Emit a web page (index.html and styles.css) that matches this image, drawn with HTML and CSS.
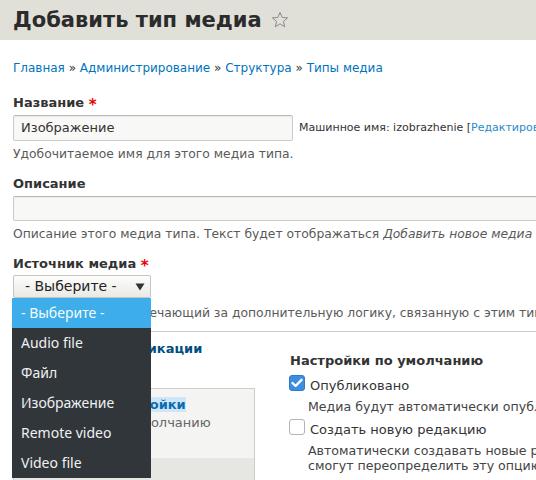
FILE: index.html
```html
<!DOCTYPE html>
<html lang="ru">
<head>
<meta charset="utf-8">
<title>Добавить тип медиа</title>
<link rel="stylesheet" href="styles.css">
</head>
<body>
<header class="page-head">
  <h1 class="page-title">Добавить тип медиа<svg class="star" width="18" height="18" viewBox="0 0 20 20" aria-hidden="true"><polygon points="10,1.5 12.4,7.2 18.5,7.6 13.8,11.6 15.3,17.6 10,14.3 4.7,17.6 6.2,11.6 1.5,7.6 7.6,7.2" fill="none" stroke="#8a8a8a" stroke-width="1.1" stroke-linejoin="round"/></svg></h1>
</header>
<main class="content">
  <nav class="breadcrumb">
    <a href="#">Главная</a> » <a href="#">Администрирование</a> » <a href="#">Структура</a> » <a href="#">Типы медиа</a>
  </nav>

  <div class="field field-first">
    <div class="label">Название <span class="req">*</span></div>
    <div class="input-row">
      <div class="text-input name-input">Изображение</div>
      <span class="machine-name">Машинное имя: izobrazhenie [<a href="#">Редактировать</a>]</span>
    </div>
    <div class="desc">Удобочитаемое имя для этого медиа типа.</div>
  </div>

  <div class="field">
    <div class="label">Описание</div>
    <div class="text-input wide-input"></div>
    <div class="desc">Описание этого медиа типа. Текст будет отображаться <em>Добавить новое медиа</em> на странице.</div>
  </div>

  <div class="field">
    <div class="label label-select">Источник медиа <span class="req">*</span></div>
    <div class="select-wrap">
      <div class="select">- Выберите -<svg class="select-arrow" width="10" height="8" viewBox="0 0 10 8" aria-hidden="true"><polygon points="0.5,0.5 9.5,0.5 5,7.5" fill="#333"/></svg></div>
      <ul class="dropdown">
        <li class="opt opt-active">- Выберите -</li>
        <li class="opt">Audio file</li>
        <li class="opt">Файл</li>
        <li class="opt">Изображение</li>
        <li class="opt">Remote video</li>
        <li class="opt">Video file</li>
      </ul>
    </div>
    <div class="desc desc-select">Источник медиа, отвечающий за дополнительную логику, связанную с этим типом медиа.</div>
  </div>

  <div class="vtabs">
    <ul class="vtabs-menu">
      <li class="vtab vtab-selected">
        <a href="#" class="vtab-title vtab-title-dark">Настройки публикации</a>
        <div class="vtab-summary">Опубликовано</div>
      </li>
      <li class="vtab vtab-other">
        <a href="#" class="vtab-title"><span class="focus">Языковые настройки</span></a>
        <div class="vtab-summary">Язык сайта: по умолчанию</div>
      </li>
    </ul>
    <div class="vtabs-pane">
      <div class="pane-heading">Настройки по умолчанию</div>
      <div class="check-row">
        <span class="checkbox checked"><svg width="12" height="10" viewBox="0 0 12 10" aria-hidden="true"><polyline points="1.5,5 4.6,8 10.5,1.8" fill="none" stroke="#fff" stroke-width="2.4" stroke-linecap="round" stroke-linejoin="round"/></svg></span>
        <span class="check-label">Опубликовано</span>
      </div>
      <div class="check-desc">Медиа будут автоматически опубликованы при создании.</div>
      <div class="check-row check-row-2">
        <span class="checkbox"></span>
        <span class="check-label">Создать новую редакцию</span>
      </div>
      <div class="check-desc">Автоматически создавать новые редакции. Пользователи с правом «Администрирование медиа»<br>смогут переопределить эту опцию.</div>
    </div>
  </div>
</main>
</body>
</html>
```
FILE: styles.css
```css
html {
  overflow: hidden;
}
body {
  margin: 0;
  min-width: 980px;
  font-family: "DejaVu Sans", "Noto Sans", sans-serif;
  font-size: 13px;
  line-height: 18px;
  color: #333;
  background: #fff;
}
a {
  color: #0074bd;
  text-decoration: none;
}

.page-head {
  background: #e0e0d8;
  height: 40px;
  padding: 0 13px;
}
.page-title {
  margin: 0;
  font-size: 21px;
  line-height: 40px;
  font-weight: bold;
  color: #2b2b2b;
  white-space: nowrap;
}
.star {
  vertical-align: -2px;
  margin-left: 9px;
}

.content {
  padding: 0 13px;
}
.breadcrumb {
  margin-top: 19px;
  font-size: 12px;
  white-space: nowrap;
}

.field {
  margin-top: 12px;
}
.field-first {
  margin-top: 17px;
}
.label {
  font-weight: bold;
  margin-bottom: 3px;
  white-space: nowrap;
}
.label-select {
  margin-bottom: 2px;
}
.req {
  color: #e00;
  font-size: 15px;
  vertical-align: -3px;
  line-height: 0;
}

.input-row {
  display: flex;
  align-items: center;
  gap: 6px;
  white-space: nowrap;
}
.text-input {
  box-sizing: border-box;
  border: 1px solid #ccc;
  border-top-color: #b8b8b8;
  border-radius: 2px;
  background: #f8f8f7;
  padding: 0 7px;
  color: #333;
  box-shadow: inset 0 1px 2px rgba(0, 0, 0, 0.06);
}
.name-input {
  width: 280px;
  height: 26px;
  line-height: 24px;
}
.wide-input {
  width: 720px;
  height: 25px;
}
.machine-name {
  font-size: 11px;
  color: #333;
}
.machine-name a {
  color: #2a8acb;
}

.desc {
  margin-top: 4px;
  font-size: 12.35px;
  color: #5a5a5a;
  white-space: nowrap;
}
.desc-select {
  margin-top: 6px;
}

.select-wrap {
  position: relative;
  width: 138px;
}
.select {
  box-sizing: border-box;
  width: 138px;
  height: 23px;
  line-height: 21px;
  border: 1px solid #c4c4c0;
  border-radius: 2px;
  background: linear-gradient(#fdfdfc, #e9e9e5);
  padding: 0 5px 0 11px;
  font-size: 14px;
  color: #222;
  display: flex;
  align-items: center;
  justify-content: space-between;
}
.select-arrow {
  display: block;
}
.dropdown {
  position: absolute;
  top: 100%;
  left: -1px;
  width: 139px;
  margin: 0;
  padding: 0;
  list-style: none;
  background: #31363b;
  z-index: 10;
}
.opt {
  height: 30px;
  line-height: 30px;
  padding-left: 9px;
  font-family: "Noto Sans", "Open Sans", sans-serif;
  font-size: 14px;
  color: #eff0f1;
  white-space: nowrap;
}
.opt-active {
  background: #3daee9;
  color: #f4fbff;
}

.vtabs {
  margin-top: 9px;
  border-top: 1px solid #ccc;
  border-left: 1px solid #ccc;
  display: flex;
  min-height: 200px;
}
.vtabs-menu {
  width: 240px;
  flex: none;
  margin: 0;
  padding: 0;
  list-style: none;
  background: #e6e6e2;
  border-right: 1px solid #ccc;
}
.vtab {
  padding: 8px 13px 12px;
  white-space: nowrap;
}
.vtab-selected {
  background: #fff;
  position: relative;
  margin-right: -1px;
}
.vtab-other {
  background: #f4f4f2;
  border-top: 1px solid #ccc;
  padding-top: 7px;
  padding-bottom: 26px;
}
.vtab-title {
  display: block;
  font-weight: bold;
  color: #0a6cb0;
}
.vtab-title-dark {
  color: #004f80;
}
.focus {
  background: #cfe6f8;
}
.vtab-summary {
  color: #666;
}

.vtabs-pane {
  padding: 20px 0 0 34px;
  white-space: nowrap;
}
.pane-heading {
  font-weight: bold;
  padding-left: 1px;
}
.check-row {
  display: flex;
  align-items: flex-start;
  gap: 5px;
  margin-top: 5px;
}
.check-row-2 {
  margin-top: 5px;
}
.checkbox {
  box-sizing: border-box;
  width: 16px;
  height: 16px;
  flex: none;
  border: 1px solid #b4b4b4;
  border-radius: 3px;
  background: #fff;
  display: flex;
  align-items: center;
  justify-content: center;
}
.checkbox.checked {
  background: #3b8ee0;
  border-color: #2f7bc8;
}
.check-label {
  margin-top: 2px;
}
.check-desc {
  margin-top: 4px;
  margin-left: 19px;
  font-size: 12.6px;
  line-height: 15px;
  color: #444;
}
```
